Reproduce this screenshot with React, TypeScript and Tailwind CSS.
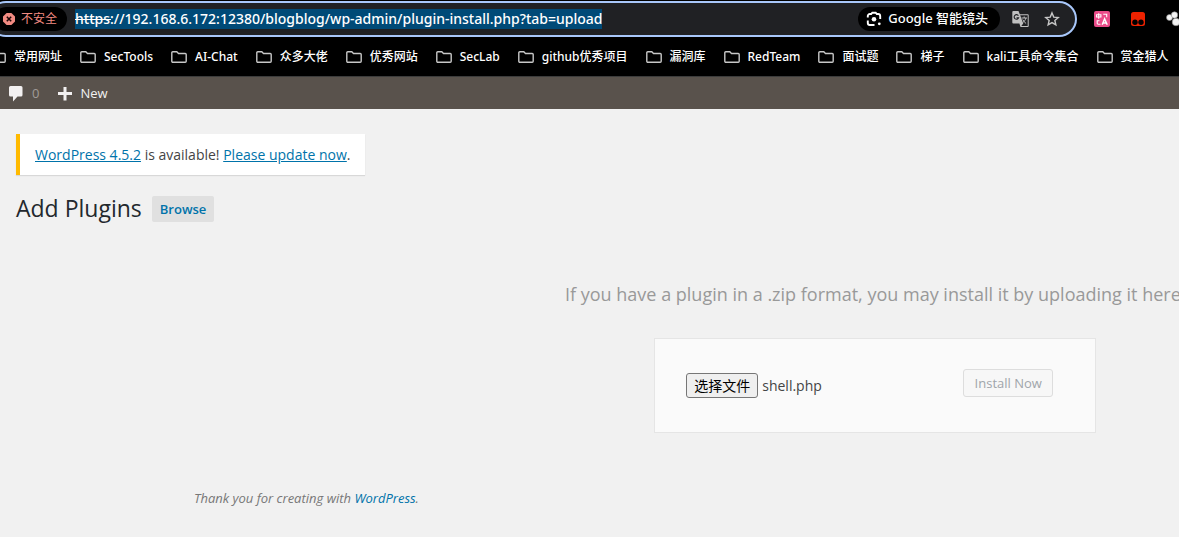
import { useState } from 'react';

const bookmarks = [
  '常用网址',
  'SecTools',
  'AI-Chat',
  '众多大佬',
  '优秀网站',
  'SecLab',
  'github优秀项目',
  '漏洞库',
  'RedTeam',
  '面试题',
  '梯子',
  'kali工具命令集合',
  '赏金猎人',
];

function FolderIcon() {
  return (
    <svg className="h-3 w-4 shrink-0" viewBox="0 0 16 12" fill="none" stroke="#c7c7c7" strokeWidth="1.4" aria-hidden="true">
      <path d="M.8 10.2V1.8a1 1 0 0 1 1-1h4l1.700 1.700h6.700a1 1 0 0 1 1 1v6.700a1 1 0 0 1-1 1H1.800a1 1 0 0 1-1-1z" />
    </svg>
  );
}

function InsecureIcon() {
  return (
    <svg className="size-3 shrink-0" viewBox="0 0 12 12" aria-hidden="true">
      <path d="M3.600 0h4.800L12 3.600v4.800L8.400 12H3.600L0 8.400V3.600z" fill="#f28b82" />
      <path d="M3.800 3.800l4.400 4.400M8.200 3.800L3.800 8.200" stroke="#1a0505" strokeWidth="1.500" />
    </svg>
  );
}

function LensIcon() {
  return (
    <svg className="size-4 shrink-0" viewBox="0 0 16 16" fill="none" stroke="#fff" strokeWidth="1.900" aria-hidden="true">
      <path d="M1.800 6.500V5a2 2 0 0 1 2-2h1.400L6.300 1.700h3.400L10.800 3h1.400a2 2 0 0 1 2 2v3M1.800 9.500V12a2 2 0 0 0 2 2h4.700" />
      <circle cx="8" cy="8.200" r="2.300" fill="#fff" stroke="none" />
      <circle cx="13.300" cy="12.800" r="1.400" fill="#fff" stroke="none" />
    </svg>
  );
}

function TranslateIcon() {
  return (
    <svg className="h-4 w-[17px]" viewBox="0 0 17 16" aria-hidden="true">
      <path d="M1.300 0H6.500L7.800 3.300H15.700a1 1 0 0 1 1 1V15a1 1 0 0 1-1 1H8.500L7.400 12.500H1.300a1 1 0 0 1-1-1V1a1 1 0 0 1 1-1z" fill="#c0c0c0" />
      <path d="M8.200 4.300h7.500V15H9.300l1.900-2.500z" fill="#202124" />
      <path d="M6.400 4.700A2.300 2.300 0 1 0 6.600 6.800H4.500" fill="none" stroke="#202124" strokeWidth="1.100" />
      <path d="M9.500 7h5.500M12.200 5.500V7M13.900 7c-.5 2-1.500 3.300-3.300 4.700M10.700 8.500c.8 1.500 1.800 2.800 3.400 4" fill="none" stroke="#c0c0c0" strokeWidth="1" />
    </svg>
  );
}

function StarIcon() {
  return (
    <svg className="size-4" viewBox="0 0 16 16" fill="none" stroke="#c7c7c7" strokeWidth="1.400" aria-hidden="true">
      <path d="M8 1.900l1.750 4.200 4.500.4-3.400 3 1 4.400L8 11.600l-3.850 2.300 1-4.400-3.400-3 4.500-.4z" />
    </svg>
  );
}

function DictionaryIcon() {
  return (
    <svg className="size-4" viewBox="0 0 16 16" fill="none" aria-hidden="true">
      <rect width="16" height="16" rx="2" fill="#ea4c89" />
      <g stroke="#fff" strokeWidth="1.100">
        <path d="M2.500 3.800h4.400v2.200H2.500zM4.700 2.300v5.500" />
        <path d="M9.300 3.200h3.400v3" />
        <path d="M3.200 9.200v3a1 1 0 0 0 1 1h2.300M3.200 9.700h2.300" />
        <path d="M8.200 13.700L10.600 7.800l2.600 5.900M9.200 11.900h3.200" strokeWidth="1.500" />
      </g>
    </svg>
  );
}

function MonkeyIcon() {
  return (
    <svg className="size-[14px]" viewBox="0 0 14 14" aria-hidden="true">
      <rect width="14" height="14" rx="2.500" fill="#ee2200" />
      <circle cx="4" cy="10.200" r="2.700" fill="#000" />
      <circle cx="10" cy="10.200" r="2.700" fill="#000" />
    </svg>
  );
}

function BlobIcon() {
  return (
    <svg className="size-4" viewBox="0 0 16 16" fill="#f4f4f4" stroke="#888" strokeWidth=".6" aria-hidden="true">
      <circle cx="3.500" cy="6.500" r="3" />
      <circle cx="8.500" cy="4" r="3.200" />
      <circle cx="10" cy="11" r="3.800" />
    </svg>
  );
}

function BrowserChrome() {
  const [url, setUrl] = useState('https://192.168.6.172:12380/blogblog/wp-admin/plugin-install.php?tab=upload');
  return (
    <header className="border-b border-[#3c3c3c] bg-black pt-px font-['Noto_Sans','Noto_Sans_CJK_SC',sans-serif] text-white">
      <div className="flex h-9 items-center">
        <div className="-ml-3 flex h-9 min-w-0 flex-1 items-center rounded-full border-2 border-[#a8c7fa] bg-[#202124] pr-[15px] pl-1">
          <button className="flex h-6 shrink-0 items-center gap-1.5 rounded-full bg-black pr-2.5 pl-[9px] text-xs text-[#f28b82]">
            <InsecureIcon />
            不安全
          </button>
          <div className="relative ml-2 flex min-w-0">
            <input
              aria-label="地址栏"
              value={url}
              onChange={(e) => setUrl(e.target.value)}
              className="h-5 min-w-0 bg-[#004a77] text-sm leading-5 font-medium text-white outline-none [field-sizing:content]"
            />
            <span className="absolute top-[10px] left-0 h-px w-9 bg-white" />
          </div>
          <button className="ml-auto flex h-6 shrink-0 items-center gap-1.5 rounded-full bg-black px-2 pr-3 text-[13px] font-medium">
            <LensIcon />
            Google 智能镜头
          </button>
          <button aria-label="翻译此页" className="ml-3 shrink-0"><TranslateIcon /></button>
          <button aria-label="添加书签" className="ml-[15px] shrink-0"><StarIcon /></button>
        </div>
        <div className="ml-[17px] flex w-[85px] shrink-0 items-center gap-[21px] overflow-hidden">
          <button aria-label="词典" className="shrink-0"><DictionaryIcon /></button>
          <button aria-label="脚本" className="shrink-0"><MonkeyIcon /></button>
          <button aria-label="扩展程序" className="shrink-0"><BlobIcon /></button>
        </div>
      </div>
      <nav aria-label="书签" className="-ml-[10px] flex h-[39px] items-center gap-[18px]">
        {bookmarks.map((name) => (
          <a key={name} href="#" className="flex shrink-0 items-center gap-2 text-xs font-medium whitespace-nowrap">
            <FolderIcon />
            {name}
          </a>
        ))}
      </nav>
    </header>
  );
}

function AdminBar() {
  return (
    <nav aria-label="Toolbar" className="flex h-8 items-center bg-[#59524c] pt-0.5 pl-2 text-[13px] text-[#f1f1f1]">
      <a href="#" className="flex items-center gap-2">
        <svg className="size-4" viewBox="0 0 16 16" fill="#f3f1f1" aria-hidden="true">
          <path d="M2.500 0H13a1.500 1.500 0 0 1 1.500 1.500V9a1.500 1.500 0 0 1-1.500 1.500H9.500L5 15.500v-5H2.500A1.500 1.500 0 0 1 1 9V1.500A1.500 1.500 0 0 1 2.500 0z" />
        </svg>
        <span className="text-[#a09b97]">0</span>
      </a>
      <a href="#" className="ml-[18px] flex items-center gap-2 font-medium">
        <svg className="size-[15px]" viewBox="0 0 15 15" fill="#f3f1f1" aria-hidden="true">
          <path d="M6.500 0h3v5H15v3H9.500v5.500h-3V8H1V5h5.500z" />
        </svg>
        New
      </a>
    </nav>
  );
}

function UploadForm() {
  const [fileName, setFileName] = useState('shell.php');
  return (
    <form
      onSubmit={(e) => e.preventDefault()}
      className="flex w-[442px] items-start justify-between border border-[#e5e5e5] bg-[#fafafa] pt-[30px] pr-[42px] pb-[34px] pl-[31px]"
    >
      <div className="mt-1 flex items-center gap-1 text-sm">
        <label
          htmlFor="pluginzip"
          className="flex h-[25px] items-center rounded-[3px] border border-[#767676] bg-[#efefef] px-[7px] text-black"
        >
          选择文件
        </label>
        <input
          id="pluginzip"
          type="file"
          className="sr-only"
          onChange={(e) => setFileName(e.target.files?.[0]?.name ?? '')}
        />
        <span>{fileName}</span>
      </div>
      <button
        disabled
        className="h-7 w-[90px] rounded-[3px] border border-[#ddd] bg-[#f7f7f7] text-[13px] leading-[26px] text-[#a0a5aa]"
      >
        Install Now
      </button>
    </form>
  );
}

export default function App() {
  return (
    <div className="flex min-h-screen flex-col overflow-hidden bg-[#f1f1f1] font-['Open_Sans','Noto_Sans_CJK_SC',sans-serif] text-[#444]">
      <BrowserChrome />
      <AdminBar />
      <main className="pt-[25px] pl-4">
        <div className="w-max border-l-4 border-[#ffba00] bg-white px-[15px] py-[10px] text-sm leading-[21px] shadow-[0_1px_1px_rgba(0,0,0,0.1)]">
          <a href="#" className="text-[#0073aa] underline">WordPress 4.5.2</a> is available!{' '}
          <a href="#" className="text-[#0073aa] underline">Please update now</a>.
        </div>
        <div className="mt-[18px] flex items-center gap-2.5">
          <h1 className="text-[23px] leading-[30px] text-[#23282d]">Add Plugins</h1>
          <a href="#" className="mt-0.5 rounded-[2px] bg-[#e0e0e0] px-2 py-1 text-[13px] leading-[18px] font-semibold text-[#0073aa]">
            Browse
          </a>
        </div>
        <section className="mt-[58px] ml-[549px] flex w-max flex-col items-center">
          <p className="mb-[30px] text-lg leading-[27px] text-[#999]">
            If you have a plugin in a .zip format, you may install it by uploading it here.
          </p>
          <UploadForm />
        </section>
      </main>
      <footer className="mt-[56px] pb-[29px] pl-[194px] text-[13px] leading-[19px] text-[#777] italic">
        Thank you for creating with <a href="#" className="text-[#0073aa]">WordPress</a>.
      </footer>
    </div>
  );
}
